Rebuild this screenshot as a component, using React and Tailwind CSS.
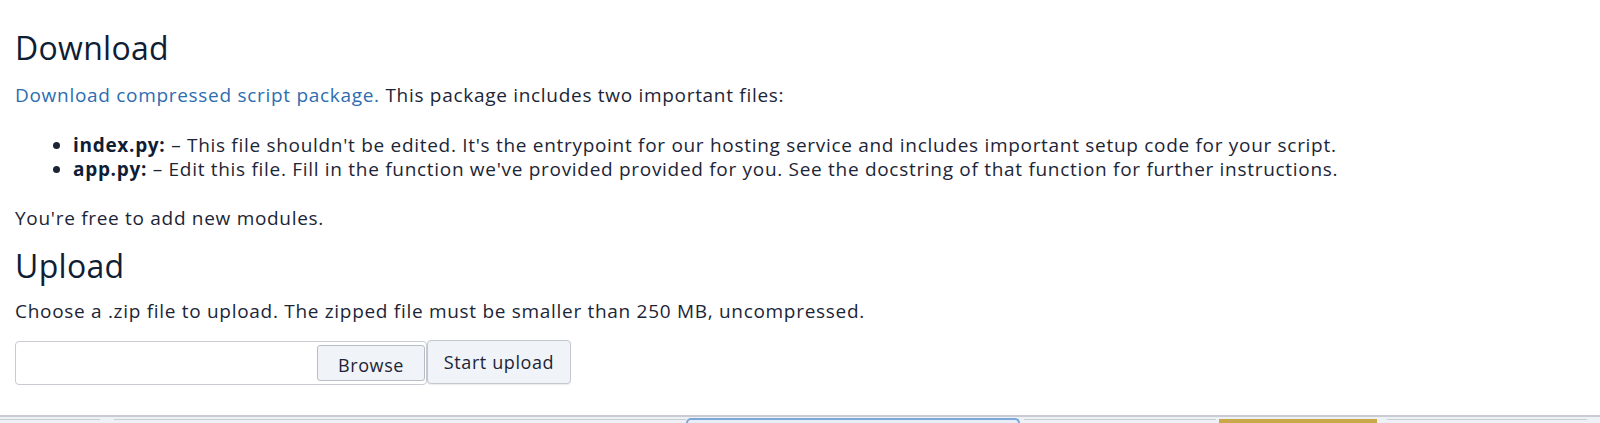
export default function App() {
  return (
    <div className="h-[423px] bg-white flex flex-col font-['Open_Sans','Noto_Sans',sans-serif] text-[#1c2536] overflow-hidden">
      <div className="flex-1 px-[15px] pt-[30px]">
        {/* Download section */}
        <h2 className="text-[32px] leading-[36px] tracking-[0.3px] text-[#0f1d35]">Download</h2>
        <p className="mt-[17px] text-[19px] leading-[24px] tracking-[0.7px]">
          <a href="#" className="text-[#2d6db0]">Download compressed script package.</a> This package includes two important files:
        </p>
        <ul className="mt-[26px] pl-[58px] list-disc text-[19px] leading-[24px] tracking-[0.7px]">
          <li>
            <b className="font-bold text-[#0f1d35]">index.py:</b> – This file shouldn't be edited. It's the entrypoint for our hosting service and includes important setup code for your script.
          </li>
          <li>
            <b className="font-bold text-[#0f1d35]">app.py:</b> – Edit this file. Fill in the function we've provided provided for you. See the docstring of that function for further instructions.
          </li>
        </ul>
        <p className="mt-[25px] text-[19px] leading-[24px] tracking-[0.7px]">You're free to add new modules.</p>

        {/* Upload section */}
        <h2 className="mt-[18px] text-[32px] leading-[36px] tracking-[0.3px] text-[#0f1d35]">Upload</h2>
        <p className="mt-[15px] text-[19px] leading-[24px] tracking-[0.7px]">
          Choose a .zip file to upload. The zipped file must be smaller than 250 MB, uncompressed.
        </p>
        <div className="mt-[17px] flex items-start">
          <div className="mt-[1px] w-[412px] h-[44px] border border-[#c8ccd2] rounded-[4px] flex items-center justify-end pr-[1px]">
            <button className="h-[36px] w-[108px] bg-[#f0f3f7] border border-[#b9bec6] rounded-[3px] text-[18px] pt-[4px] tracking-[0.6px] text-[#1c2536]">
              Browse
            </button>
          </div>
          <button className="h-[44px] w-[144px] bg-[#f0f3f8] border border-[#c3c8cf] rounded-[4px] text-[18px] tracking-[0.6px] text-[#1c2536] shadow-[0_1px_1px_rgba(0,0,0,0.08)]">
            Start upload
          </button>
        </div>
      </div>

      {/* bottom toolbar strip */}
      <div className="h-[8px] border-t-2 border-[#c9cdd3] bg-[#edf1f6] flex items-end">
        <div className="h-[4px] w-[100px] border-t border-[#c9ced6]" />
        <div className="h-[4px] w-[14px]" />
        <div className="h-[4px] w-[572px] border-t border-[#c9ced6]" />
        <div className="h-[5px] w-[334px] border-2 border-b-0 border-[#7ea7d8] rounded-t-[6px] bg-[#e8eef7]" />
        <div className="h-[4px] w-[192px] border-t border-[#c9ced6] ml-[4px]" />
        <div className="h-[4px] w-[158px] bg-[#c9a84a] ml-[3px]" />
        <div className="h-[4px] w-[200px] border-t border-[#c9ced6] ml-[10px]" />
      </div>
    </div>
  );
}
